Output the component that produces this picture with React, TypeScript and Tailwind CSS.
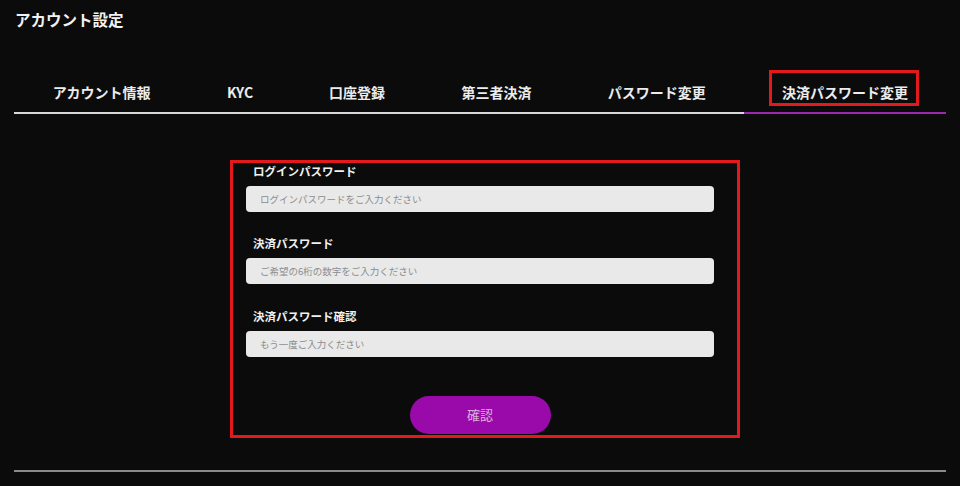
import React from "react";

const tabs = [
  { label: "アカウント情報", w: "w-[176px]" },
  { label: "KYC", w: "w-[102px]" },
  { label: "口座登録", w: "w-[133px]" },
  { label: "第三者決済", w: "w-[147px]" },
  { label: "パスワード変更", w: "w-[175px]" },
  { label: "決済パスワード変更", w: "w-[203px]", active: true },
];

function Field({ label, placeholder, mt }: { label: string; placeholder: string; mt: string }) {
  return (
    <div className={mt}>
      <div className="h-[16px] leading-[16px] pl-[7px] text-[11.5px] font-bold text-[#f0f0f0]">{label}</div>
      <input
        type="password"
        placeholder={placeholder}
        className="mt-[7px] block w-full h-[26px] rounded-[4px] bg-[#e9e9e9] pl-[14px] text-[9.5px] text-[#333] placeholder:text-[#8c8c8c] outline-none"
      />
    </div>
  );
}

export default function App() {
  return (
    <div
      className="w-[960px] h-[486px] bg-[#0b0b0b] overflow-hidden"
      style={{ fontFamily: '"Noto Sans CJK JP", "Noto Sans", sans-serif' }}
    >
      <div className="h-[40px] flex items-center pl-[15px] text-[15.5px] font-bold text-[#f2f2f2]">
        アカウント設定
      </div>
      <div className="mx-[14px] mt-[30px] flex">
        {tabs.map((t) => (
          <div
            key={t.label}
            className={`${t.w} relative h-[44px] flex items-center justify-center pt-[2px] text-[14px] font-bold text-[#ececec] border-b-2 ${
              t.active ? "border-[#9c27b0]" : "border-[#d8d8d8]"
            }`}
          >
            {t.label}
            {t.active && (
              <div className="absolute left-[25px] top-0 w-[150px] h-[36px] border-[3px] border-[#e3191c]" />
            )}
          </div>
        ))}
      </div>
      <div className="mx-[14px]">
        <div className="relative w-[468px] mx-auto mt-[49px]">
          <div className="absolute left-[-16px] top-[-3px] w-[510px] h-[278px] border-[3px] border-[#e3191c] pointer-events-none" />
          <Field label="ログインパスワード" placeholder="ログインパスワードをご入力ください" mt="" />
          <Field label="決済パスワード" placeholder="ご希望の6桁の数字をご入力ください" mt="mt-[23px]" />
          <Field label="決済パスワード確認" placeholder="もう一度ご入力ください" mt="mt-[24px]" />
          <div className="mt-[39px] flex justify-center">
            <button className="w-[141px] h-[38px] rounded-full bg-[#9a0aaa] text-[13px] text-[#d9b0de]">
              確認
            </button>
          </div>
        </div>
        <div className="mt-[36px] h-[2px] bg-[#8a8a8a]" />
      </div>
    </div>
  );
}
